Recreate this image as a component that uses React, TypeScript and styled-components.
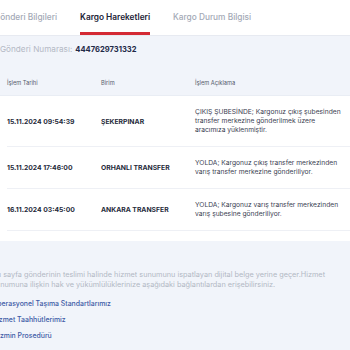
import React, { useState } from 'react';
import styled, { createGlobalStyle } from 'styled-components';

const GlobalStyle = createGlobalStyle`
  html, body {
    margin: 0;
    padding: 0;
    background: #f1f4fa;
    overflow: hidden;
  }
  body {
    font-family: Inter, "Noto Sans", sans-serif;
    -webkit-font-smoothing: antialiased;
  }
`;

// the reference is scrolled a little to the right, so the page starts left of the window
const Page = styled.div`
  margin-left: -8px;
  width: 380px;
`;

const TabBar = styled.div`
  display: flex;
  gap: 23px;
  padding-left: 2px;
  background: #ffffff;
  border-bottom: 1px solid #e7eaf1;
`;

const Tab = styled.button<{ $active?: boolean }>`
  height: 35px;
  padding: 2px 0 0;
  margin: 0;
  box-sizing: border-box;
  background: none;
  border: none;
  border-bottom: 3px solid ${({ $active }) => ($active ? '#d42a34' : 'transparent')};
  font-family: inherit;
  font-size: 8.3px;
  font-weight: ${({ $active }) => ($active ? 600 : 500)};
  color: ${({ $active }) => ($active ? '#1c2336' : '#a3a9b6')};
  white-space: nowrap;
  cursor: pointer;
`;

const ShipmentInfo = styled.div`
  padding: 8px 0 0 8px;
  font-size: 8.2px;
  line-height: 10px;
  color: #b4b9c5;
`;

const ShipmentNo = styled.span`
  margin-left: 3px;
  font-size: 7.6px;
  font-weight: 700;
  color: #1f2a48;
`;

const Table = styled.div`
  margin: 14px 0 0 8px;
`;

const HeadRow = styled.div`
  display: grid;
  grid-template-columns: 94px 94px 150px;
  align-items: center;
  height: 26px;
  padding-left: 7px;
  border-bottom: 1px solid #e9edf4;
`;

const HeadCell = styled.div`
  font-size: 5.7px;
  color: #545b6c;
`;

const Body = styled.div`
  background: #ffffff;
  padding: 0 0 10px 7px;
`;

const Row = styled.div`
  display: grid;
  grid-template-columns: 94px 94px 146px;
  align-items: center;
  padding: 11.5px 0;
  border-bottom: 1px solid #eef0f5;
`;

const StrongCell = styled.div`
  font-size: 6.8px;
  font-weight: 700;
  color: #262b3b;
  white-space: nowrap;
`;

const Description = styled.div`
  font-size: 6.7px;
  line-height: 9px;
  color: #3b4152;
`;

const Footer = styled.div`
  padding: 29px 0 0;
`;

const Note = styled.p`
  width: 346px;
  margin: 0 0 8px;
  font-size: 7.3px;
  line-height: 10px;
  color: #b2b8c4;
`;

const LinkList = styled.div`
  display: flex;
  flex-direction: column;
  gap: 6px;
  padding-top: 1px;
`;

const FooterLink = styled.a`
  font-size: 6.9px;
  line-height: 10px;
  font-weight: 500;
  color: #3e5ba6;
  text-decoration: none;
`;

const movements = [
  {
    date: '15.11.2024 09:54:39',
    unit: 'ŞEKERPINAR',
    text: 'ÇIKIŞ ŞUBESİNDE; Kargonuz çıkış şubesinden transfer merkezine gönderilmek üzere aracımıza yüklenmiştir.',
  },
  {
    date: '15.11.2024 17:46:00',
    unit: 'ORHANLI TRANSFER',
    text: 'YOLDA; Kargonuz çıkış transfer merkezinden varış transfer merkezine gönderiliyor.',
  },
  {
    date: '16.11.2024 03:45:00',
    unit: 'ANKARA TRANSFER',
    text: 'YOLDA; Kargonuz varış transfer merkezinden varış şubesine gönderiliyor.',
  },
];

const tabs = ['Gönderi Bilgileri', 'Kargo Hareketleri', 'Kargo Durum Bilgisi'];

const App: React.FC = () => {
  const [activeTab, setActiveTab] = useState(1);

  return (
    <>
      <GlobalStyle />
      <Page>
        <TabBar>
          {tabs.map((t, i) => (
            <Tab key={t} $active={i === activeTab} onClick={() => setActiveTab(i)}>
              {t}
            </Tab>
          ))}
        </TabBar>

        <ShipmentInfo>
          Gönderi Numarası:<ShipmentNo>4447629731332</ShipmentNo>
        </ShipmentInfo>

        <Table>
          <HeadRow>
            <HeadCell>İşlem Tarihi</HeadCell>
            <HeadCell>Birim</HeadCell>
            <HeadCell>İşlem Açıklama</HeadCell>
          </HeadRow>
          <Body>
            {movements.map((m) => (
              <Row key={m.date}>
                <StrongCell>{m.date}</StrongCell>
                <StrongCell>{m.unit}</StrongCell>
                <Description>{m.text}</Description>
              </Row>
            ))}
          </Body>
        </Table>

        <Footer>
          <Note>
            Bu sayfa gönderinin teslimi halinde hizmet sunumunu ispatlayan dijital belge yerine geçer.Hizmet
            sunumuna ilişkin hak ve yükümlülüklerinize aşağıdaki bağlantılardan erişebilirsiniz.
          </Note>
          <LinkList>
            <FooterLink href="#">Operasyonel Taşıma Standartlarımız</FooterLink>
            <FooterLink href="#">Hizmet Taahhütlerimiz</FooterLink>
            <FooterLink href="#">Tazmin Prosedürü</FooterLink>
          </LinkList>
        </Footer>
      </Page>
    </>
  );
};

export default App;
